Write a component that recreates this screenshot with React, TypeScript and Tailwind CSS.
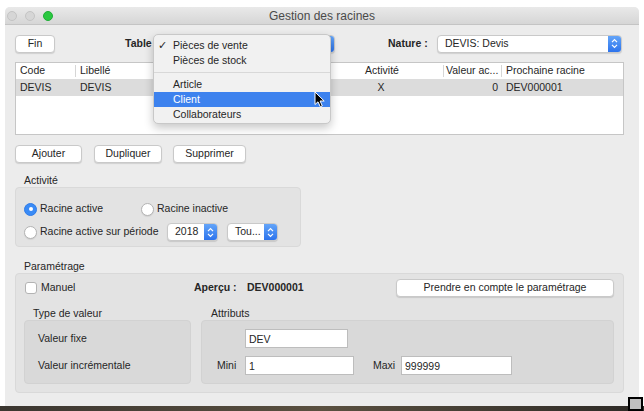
import React from 'react';

const Stepper = () => (
  <span className="flex h-full w-[13px] shrink-0 items-center justify-center rounded-r-[3px] bg-linear-to-b from-[#63a4f8] to-[#2c73ec]">
    <svg width="7" height="11" viewBox="0 0 7 11">
      <path d="M1 4.2 L3.5 1.7 L6 4.2 M1 6.8 L3.5 9.3 L6 6.8" stroke="white" strokeWidth="1.2" fill="none" />
    </svg>
  </span>
);

const Popup = ({ label, className }: { label: string; className: string }) => (
  <div className={`flex shrink-0 items-center rounded-[4px] border border-[#c9c9c9] bg-white shadow-[0_1px_1px_rgba(0,0,0,0.12)] ${className}`}>
    <span className="flex-1 truncate whitespace-nowrap pl-[7px]">{label}</span>
    <Stepper />
  </div>
);

const Button = ({ label, className }: { label: string; className: string }) => (
  <div className={`flex h-[18px] shrink-0 items-center justify-center whitespace-nowrap rounded-[4px] border border-[#c9c9c9] bg-white shadow-[0_1px_1px_rgba(0,0,0,0.12)] ${className}`}>
    {label}
  </div>
);

const Radio = ({ checked }: { checked?: boolean }) =>
  checked ? (
    <span className="flex h-[13px] w-[13px] shrink-0 items-center justify-center rounded-full border border-[#2f7ce8] bg-[#3a8bf6]">
      <span className="h-[4px] w-[4px] rounded-full bg-white" />
    </span>
  ) : (
    <span className="h-[13px] w-[13px] shrink-0 rounded-full border border-[#b3b3b3] bg-white shadow-[0_1px_1px_rgba(0,0,0,0.08)]" />
  );

const Field = ({ value, className }: { value: string; className: string }) => (
  <div className={`flex h-[19px] shrink-0 items-center border border-[#bdbdbd] bg-white pl-[3px] pt-[2px] ${className}`}>{value}</div>
);

const HeadSep = () => <span className="h-[12px] w-px shrink-0 bg-[#d6d6d6]" />;

export default function App() {
  return (
    <div className="relative flex h-[411px] w-[644px] flex-col overflow-hidden bg-white pt-[7px] font-['Liberation_Sans',Arial,sans-serif] text-[10.5px] text-[#262626]">
      <div className="ml-[5px] flex h-[399px] w-[634px] flex-col rounded-t-[5px] bg-[#ececec]">
        {/* title bar */}
        <div className="relative flex h-[18px] shrink-0 items-center justify-center rounded-t-[5px] border-b border-[#c4c4c4] bg-linear-to-b from-[#e9e9e9] to-[#d6d6d6]">
          <div className="absolute left-[2px] top-[4px] flex gap-[8px]">
            <span className="h-[10px] w-[10px] rounded-full border border-[#c4c4c4] bg-[#d6d6d6]" />
            <span className="h-[10px] w-[10px] rounded-full border border-[#c4c4c4] bg-[#d6d6d6]" />
            <span className="h-[10px] w-[10px] rounded-full border border-[#1fae36] bg-[#2bc840]" />
          </div>
          <span className="text-[12px] text-[#4a4a4a]">Gestion des racines</span>
        </div>

        {/* body */}
        <div className="relative flex flex-1 flex-col pl-[10px] pr-[15px]">
          {/* toolbar */}
          <div className="mt-[9px] flex h-[19px] items-center">
            <Button label="Fin" className="w-[40px]" />
            <span className="ml-[70px] w-[32px] shrink-0 whitespace-nowrap font-bold">Table</span>
            <Popup label="" className="h-[18px] w-[178px]" />
            <span className="ml-[53px] w-[49px] shrink-0 whitespace-nowrap font-bold">Nature :</span>
            <Popup label="DEVIS: Devis" className="h-[18px] w-[185px]" />
          </div>

          {/* list */}
          <div className="mt-[9px] flex h-[73px] w-[609px] flex-col border border-[#c6c6c6] bg-white">
            <div className="flex h-[16px] shrink-0 items-center whitespace-nowrap">
              <span className="w-[59px] pl-[4px]">Code</span>
              <HeadSep />
              <span className="w-[244px] pl-[4px]">Libellé</span>
              <HeadSep />
              <span className="w-[122px] text-center">Activité</span>
              <HeadSep />
              <span className="w-[57px] pl-[2px]">Valeur ac...</span>
              <HeadSep />
              <span className="pl-[4px]">Prochaine racine</span>
            </div>
            <div className="flex h-[17px] shrink-0 items-center bg-[#dcdcdc]">
              <span className="w-[60px] pl-[4px]">DEVIS</span>
              <span className="w-[245px] pl-[4px]">DEVIS</span>
              <span className="w-[120px] text-center">X</span>
              <span className="w-[61px] pr-[4px] text-right">0</span>
              <span className="pl-[4px]">DEV000001</span>
            </div>
          </div>

          {/* buttons */}
          <div className="mt-[10px] flex h-[18px] items-center">
            <Button label="Ajouter" className="w-[67px]" />
            <Button label="Dupliquer" className="ml-[12px] w-[68px]" />
            <Button label="Supprimer" className="ml-[11px] w-[73px]" />
          </div>

          {/* activité */}
          <div className="mt-[11px] h-[12px] pl-[9px] leading-[12px]">Activité</div>
          <div className="mt-[1px] flex h-[60px] w-[286px] flex-col gap-[5px] rounded-[4px] border border-[#d9d9d9] bg-[#e3e3e3] pl-[8px] pt-[12px]">
            <div className="flex h-[18px] items-center">
              <div className="flex w-[117px] items-center gap-[3px]">
                <Radio checked />
                <span>Racine active</span>
              </div>
              <div className="flex items-center gap-[3px]">
                <Radio />
                <span>Racine inactive</span>
              </div>
            </div>
            <div className="flex h-[18px] items-center">
              <div className="flex w-[143px] items-center gap-[3px] whitespace-nowrap">
                <Radio />
                <span>Racine active sur période</span>
              </div>
              <Popup label="2018" className="h-[18px] w-[51px]" />
              <Popup label="Tou..." className="ml-[9px] h-[18px] w-[51px]" />
            </div>
          </div>

          {/* paramétrage */}
          <div className="mt-[13px] h-[12px] pl-[9px] leading-[12px]">Paramétrage</div>
          <div className="mt-[1px] flex h-[120px] w-[609px] flex-col rounded-[4px] border border-[#d9d9d9] bg-[#e3e3e3] pl-[8px] pr-[9px] pt-[5px]">
            <div className="flex h-[18px] items-center">
              <div className="flex w-[170px] items-center gap-[4px] pl-[1px]">
                <span className="h-[12px] w-[12px] rounded-[3px] border border-[#b3b3b3] bg-white" />
                <span>Manuel</span>
              </div>
              <span className="w-[53px] whitespace-nowrap font-bold">Aperçu :</span>
              <span className="font-bold">DEV000001</span>
              <Button label="Prendre en compte le paramétrage" className="ml-auto w-[218px]" />
            </div>
            <div className="mt-[10px] flex gap-[10px]">
              <div className="flex w-[167px] flex-col">
                <div className="h-[12px] pl-[9px] leading-[12px]">Type de valeur</div>
                <div className="mt-[1px] flex h-[64px] flex-col gap-[8px] rounded-[4px] border border-[#d2d2d2] bg-[#d9d9d9] pl-[13px] pt-[8px]">
                  <div className="flex h-[19px] items-center">Valeur fixe</div>
                  <div className="flex h-[19px] items-center">Valeur incrémentale</div>
                </div>
              </div>
              <div className="flex flex-1 flex-col">
                <div className="h-[12px] pl-[10px] leading-[12px]">Attributs</div>
                <div className="mt-[1px] flex h-[64px] flex-col gap-[8px] rounded-[4px] border border-[#d2d2d2] bg-[#d9d9d9] pl-[15px] pt-[8px]">
                  <div className="flex h-[19px] items-center pl-[28px]">
                    <Field value="DEV" className="w-[103px]" />
                  </div>
                  <div className="flex h-[19px] items-center">
                    <span className="w-[28px]">Mini</span>
                    <Field value="1" className="w-[109px]" />
                    <span className="ml-[19px] w-[28px]">Maxi</span>
                    <Field value="999999" className="w-[111px]" />
                  </div>
                </div>
              </div>
            </div>
          </div>

          {/* open Table menu */}
          <div className="absolute left-[148px] top-[9px] flex w-[178px] flex-col rounded-[5px] border border-[#c8c8c8] bg-[#f1f1f1] pb-[1px] pt-[3px] shadow-[0_4px_10px_rgba(0,0,0,0.22)]">
            <div className="relative flex h-[15px] items-center pl-[19px]">
              <span className="absolute left-[4px]">✓</span>Pièces de vente
            </div>
            <div className="flex h-[15px] items-center pl-[19px]">Pièces de stock</div>
            <div className="flex h-[9px] items-center">
              <span className="h-px w-full bg-[#d8d8d8]" />
            </div>
            <div className="flex h-[15px] items-center pl-[19px]">Article</div>
            <div className="flex h-[15px] items-center bg-[#3d82ee] pl-[19px] text-white">Client</div>
            <div className="flex h-[15px] items-center pl-[19px]">Collaborateurs</div>
          </div>

          {/* mouse pointer */}
          <svg className="absolute left-[309px] top-[66px]" width="12" height="17" viewBox="0 0 12 17">
            <path d="M1 1 L1 13.5 L4 10.8 L6.3 15.8 L8.3 14.9 L6.1 10 L10.2 10 Z" fill="black" stroke="white" strokeWidth="1" strokeLinejoin="round" />
          </svg>
        </div>
      </div>
      <div className="flex-1 bg-linear-to-r from-[#3b3630] via-[#5a5040] to-[#2d2a26]" />

      {/* resize grip */}
      <span className="absolute left-[628px] top-[397px] h-[14px] w-[15px] border-2 border-black bg-[#bfbfbf]" />
    </div>
  );
}
